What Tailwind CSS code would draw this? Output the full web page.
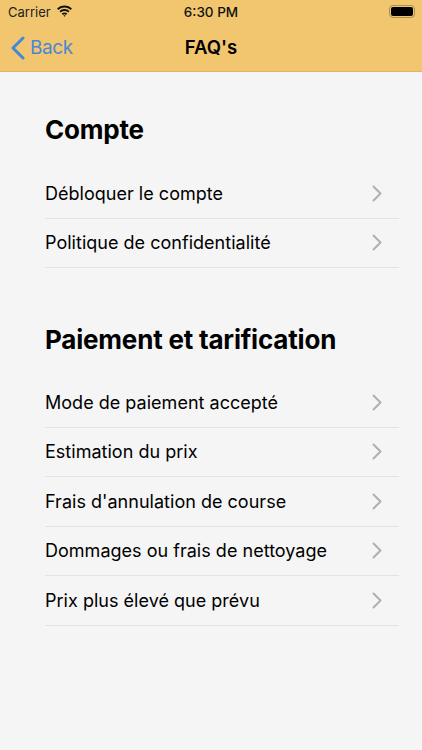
<!DOCTYPE html>
<html lang="fr">
<head>
    <meta charset="UTF-8">
    <meta name="viewport" content="width=device-width, initial-scale=1.0">
    <title>FAQ's</title>
    <script src="https://cdn.jsdelivr.net/npm/@tailwindcss/browser@4"></script>
</head>
<body class="bg-[#f5f5f5] font-['Inter','Liberation_Sans',sans-serif] text-black">
    <div class="w-[422px] h-[750px] overflow-hidden flex flex-col">
        <!-- Header -->
        <header class="h-[72px] shrink-0 bg-[#f2c66f] border-b border-[#e0b56a]">
            <div class="h-6 flex items-center justify-between pl-2 pr-[7px] relative text-[13px] leading-none">
                <div class="flex items-center gap-[5px]">
                    <span class="text-[#222]">Carrier</span>
                    <svg width="17" height="12" viewBox="0 0 17 12" fill="#111" class="mb-[2px]">
                        <path d="M8.5 2.4c2.4 0 4.6.9 6.2 2.5l1.2-1.3C14 1.700 11.400.6 8.500.6S3 1.700 1.100 3.600l1.200 1.300C3.900 3.300 6.100 2.400 8.500 2.400z"/>
                        <path d="M8.500 5.900c1.400 0 2.700.5 3.700 1.500l1.300-1.300C12.200 4.800 10.400 4 8.500 4s-3.700.8-5 2.100l1.300 1.300c1-1 2.300-1.500 3.700-1.500z"/>
                        <path d="M8.500 9.300c.6 0 1.100.2 1.500.6l1.300-1.300c-.8-.7-1.800-1.100-2.800-1.100s-2 .4-2.800 1.100L7 9.900c.4-.4.900-.6 1.500-.6z"/>
                        <path d="M8.500 11.800l1-1.100c-.6-.5-1.400-.5-2 0z"/>
                    </svg>
                </div>
                <span class="absolute left-0 right-0 text-center text-[13.500px] font-medium text-[#111] pt-[1px] pointer-events-none">6:30 PM</span>
                <div class="w-[26px] h-[13px] rounded-[4px] border border-[#a98f55] p-[1px] mb-[1px]">
                    <div class="w-full h-full rounded-[2px] bg-black"></div>
                </div>
            </div>
            <div class="h-[47px] flex items-center relative">
                <div class="flex items-center gap-[5px] pl-[11px] text-[#4a86d8] text-[19px] tracking-[-0.4px]">
                    <svg width="14" height="24" viewBox="0 0 14 24" fill="none" stroke="#4a86d8" stroke-width="3" stroke-linecap="round" stroke-linejoin="round">
                        <path d="M12 2L2 12l10 10"/>
                    </svg>
                    <span class="pt-[1px]">Back</span>
                </div>
                <h1 class="absolute left-0 right-0 text-center text-[18.500px] font-semibold pointer-events-none">FAQ's</h1>
            </div>
        </header>

        <main class="pl-[45px] pr-[23px]">
            <h2 class="text-[26px] tracking-[-0.2px] font-bold leading-none mt-[45px] mb-[26px]">Compte</h2>
            <ul>
                <li class="h-[49.500px] flex items-center justify-between border-b border-[#e3e3e3] text-[18px] tracking-[0.02px] pr-[17px]">
                    <span>Débloquer le compte</span>
                    <svg width="10" height="17" viewBox="0 0 10 17" fill="none" stroke="#b0b0b0" stroke-width="2" stroke-linecap="round" stroke-linejoin="round"><path d="M1.500 1.500l7 7-7 7"/></svg>
                </li>
                <li class="h-[49.500px] flex items-center justify-between border-b border-[#e3e3e3] text-[18px] tracking-[0.02px] pr-[17px]">
                    <span>Politique de confidentialité</span>
                    <svg width="10" height="17" viewBox="0 0 10 17" fill="none" stroke="#b0b0b0" stroke-width="2" stroke-linecap="round" stroke-linejoin="round"><path d="M1.500 1.500l7 7-7 7"/></svg>
                </li>
            </ul>

            <h2 class="text-[26px] tracking-[-0.2px] font-bold leading-none mt-[59px] mb-[25px]">Paiement et tarification</h2>
            <ul>
                <li class="h-[49.500px] flex items-center justify-between border-b border-[#e3e3e3] text-[18px] tracking-[0.02px] pr-[17px]">
                    <span>Mode de paiement accepté</span>
                    <svg width="10" height="17" viewBox="0 0 10 17" fill="none" stroke="#b0b0b0" stroke-width="2" stroke-linecap="round" stroke-linejoin="round"><path d="M1.500 1.500l7 7-7 7"/></svg>
                </li>
                <li class="h-[49.500px] flex items-center justify-between border-b border-[#e3e3e3] text-[18px] tracking-[0.02px] pr-[17px]">
                    <span>Estimation du prix</span>
                    <svg width="10" height="17" viewBox="0 0 10 17" fill="none" stroke="#b0b0b0" stroke-width="2" stroke-linecap="round" stroke-linejoin="round"><path d="M1.500 1.500l7 7-7 7"/></svg>
                </li>
                <li class="h-[49.500px] flex items-center justify-between border-b border-[#e3e3e3] text-[18px] tracking-[0.02px] pr-[17px]">
                    <span>Frais d'annulation de course</span>
                    <svg width="10" height="17" viewBox="0 0 10 17" fill="none" stroke="#b0b0b0" stroke-width="2" stroke-linecap="round" stroke-linejoin="round"><path d="M1.500 1.500l7 7-7 7"/></svg>
                </li>
                <li class="h-[49.500px] flex items-center justify-between border-b border-[#e3e3e3] text-[18px] tracking-[0.02px] pr-[17px]">
                    <span>Dommages ou frais de nettoyage</span>
                    <svg width="10" height="17" viewBox="0 0 10 17" fill="none" stroke="#b0b0b0" stroke-width="2" stroke-linecap="round" stroke-linejoin="round"><path d="M1.500 1.500l7 7-7 7"/></svg>
                </li>
                <li class="h-[49.500px] flex items-center justify-between border-b border-[#e3e3e3] text-[18px] tracking-[0.02px] pr-[17px]">
                    <span>Prix plus élevé que prévu</span>
                    <svg width="10" height="17" viewBox="0 0 10 17" fill="none" stroke="#b0b0b0" stroke-width="2" stroke-linecap="round" stroke-linejoin="round"><path d="M1.500 1.500l7 7-7 7"/></svg>
                </li>
            </ul>
        </main>
    </div>
</body>
</html>
